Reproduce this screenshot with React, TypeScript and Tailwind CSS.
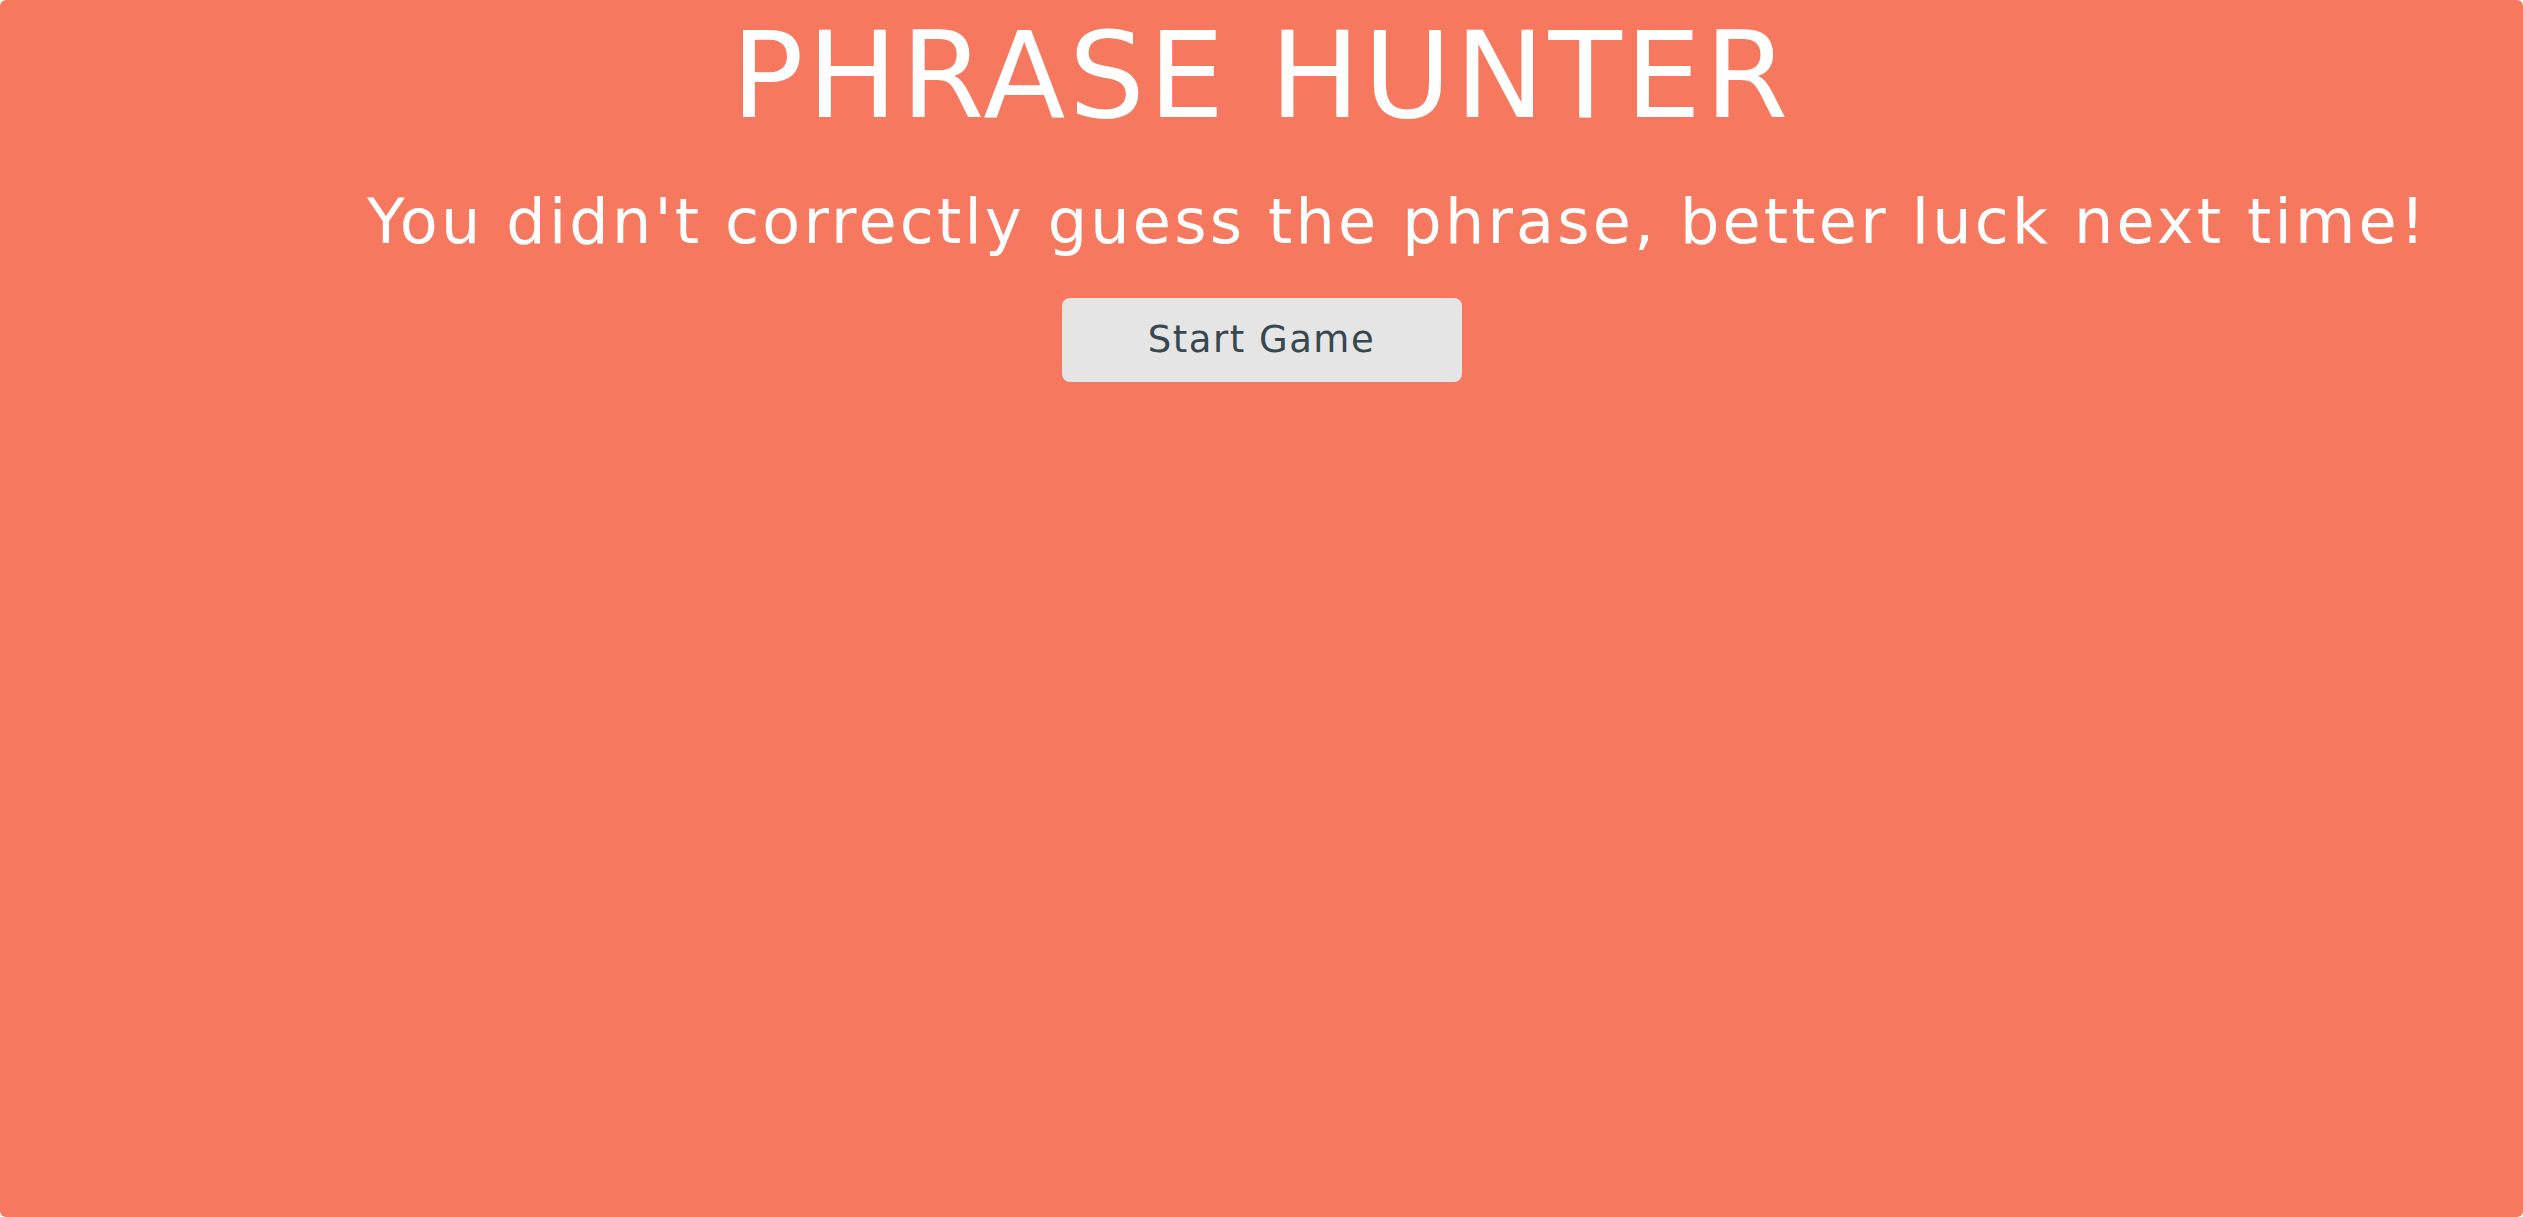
import React from "react";

const App: React.FC = () => {
  return (
    <div className="min-h-screen bg-white">
      <div
        className="min-h-screen rounded-[6px] bg-[#f6795f] flex flex-col items-center pt-[16px]"
        style={{ fontFamily: '"DejaVu Sans", "Liberation Sans", sans-serif' }}
      >
        <h1 className="text-[120px] leading-none font-normal text-white tracking-[3.6px]">
          PHRASE HUNTER
        </h1>
        <div className="w-[1789px] mt-[55px]">
          <h2 className="text-[62px] leading-none font-normal text-white whitespace-nowrap tracking-[3.2px]">
            You didn't correctly guess the phrase, better luck next time!
          </h2>
        </div>
        <button className="mt-[45px] w-[400px] h-[84px] rounded-[8px] bg-[#e5e5e5] text-[#37474f] text-[37px] font-normal tracking-[1.5px] cursor-pointer">
          Start Game
        </button>
      </div>
    </div>
  );
};

export default App;
